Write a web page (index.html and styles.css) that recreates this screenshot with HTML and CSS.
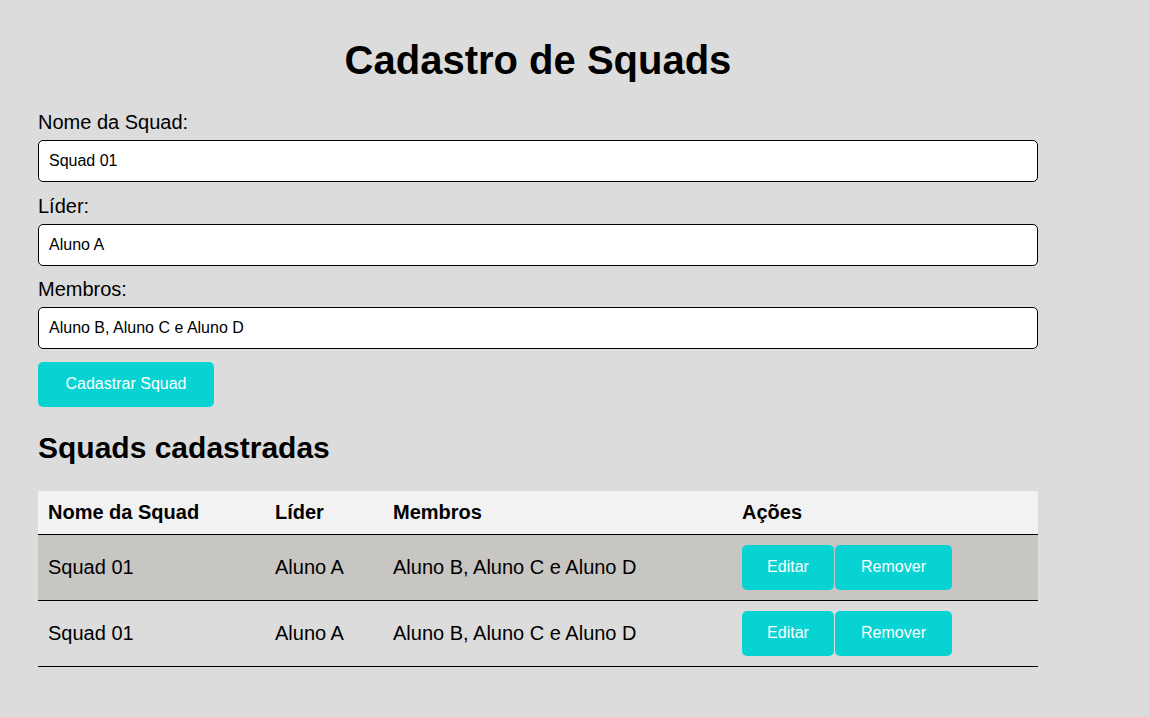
FILE: index.html
```html
<!DOCTYPE html>
<html lang="pt-BR">
<head>
<meta charset="utf-8">
<title>Cadastro de Squads</title>
<link rel="stylesheet" href="styles.css">
</head>
<body>
<main class="page">
  <h1 class="title">Cadastro de Squads</h1>
  <form class="form">
    <label class="label" for="nome">Nome da Squad:</label>
    <input class="field" id="nome" type="text" value="Squad 01">
    <label class="label" for="lider">Líder:</label>
    <input class="field" id="lider" type="text" value="Aluno A">
    <label class="label" for="membros">Membros:</label>
    <input class="field" id="membros" type="text" value="Aluno B, Aluno C e Aluno D">
    <button class="btn btn-submit" type="button">Cadastrar Squad</button>
  </form>
  <h2 class="subtitle">Squads cadastradas</h2>
  <table class="table">
    <colgroup>
      <col class="col-nome">
      <col class="col-lider">
      <col class="col-membros">
      <col class="col-acoes">
    </colgroup>
    <thead>
      <tr class="head-row">
        <th>Nome da Squad</th>
        <th>Líder</th>
        <th>Membros</th>
        <th>Ações</th>
      </tr>
    </thead>
    <tbody>
      <tr class="row row-alt">
        <td>Squad 01</td>
        <td>Aluno A</td>
        <td>Aluno B, Aluno C e Aluno D</td>
        <td><div class="actions"><button class="btn btn-row btn-edit" type="button">Editar</button><button class="btn btn-row btn-remove" type="button">Remover</button></div></td>
      </tr>
      <tr class="row">
        <td>Squad 01</td>
        <td>Aluno A</td>
        <td>Aluno B, Aluno C e Aluno D</td>
        <td><div class="actions"><button class="btn btn-row btn-edit" type="button">Editar</button><button class="btn btn-row btn-remove" type="button">Remover</button></div></td>
      </tr>
    </tbody>
  </table>
</main>
</body>
</html>
```
FILE: styles.css
```css
* { box-sizing: border-box; }

html, body {
  margin: 0;
  background: #dcdcdc;
}

body {
  font-family: "Liberation Sans", Arial, sans-serif;
  color: #000;
}

.page {
  width: 1076px;
  padding: 37px 38px 40px;
}

.title {
  margin: 0 0 28px;
  font-size: 40px;
  line-height: 46px;
  font-weight: bold;
  text-align: center;
}

.form {
  display: flex;
  flex-direction: column;
  align-items: flex-start;
}

.label {
  font-size: 20px;
  line-height: 23px;
  margin-bottom: 6px;
}

.field {
  width: 100%;
  height: 42px;
  margin: 0 0 12.5px;
  padding: 0 10px;
  border: 1px solid #000;
  border-radius: 5px;
  background: #fff;
  font-family: "Liberation Sans", Arial, sans-serif;
  font-size: 16px;
  color: #000;
}

.btn {
  border: none;
  border-radius: 5px;
  background: #07d3d2;
  color: #fff;
  font-family: "Liberation Sans", Arial, sans-serif;
  font-size: 16px;
  cursor: pointer;
}

.btn-submit {
  width: 176px;
  height: 45px;
  padding: 0;
}

.subtitle {
  margin: 24px 0 26px;
  font-size: 30px;
  line-height: 34px;
  font-weight: bold;
}

.table {
  width: 1000px;
  border-collapse: collapse;
  font-size: 20px;
}

.col-nome { width: 227px; }
.col-lider { width: 118px; }
.col-membros { width: 349px; }
.col-acoes { width: 306px; }

.table th,
.table td {
  padding: 10px;
  text-align: left;
  line-height: 23px;
  border-bottom: 1px solid #000;
}

.table th {
  font-weight: bold;
}

.head-row {
  background: #f2f2f2;
}

.row-alt {
  background: #c8c6c3;
}

.actions {
  display: flex;
  gap: 1px;
}

.btn-row {
  height: 45px;
}

.btn-edit {
  width: 92px;
}

.btn-remove {
  width: 117px;
}
```
